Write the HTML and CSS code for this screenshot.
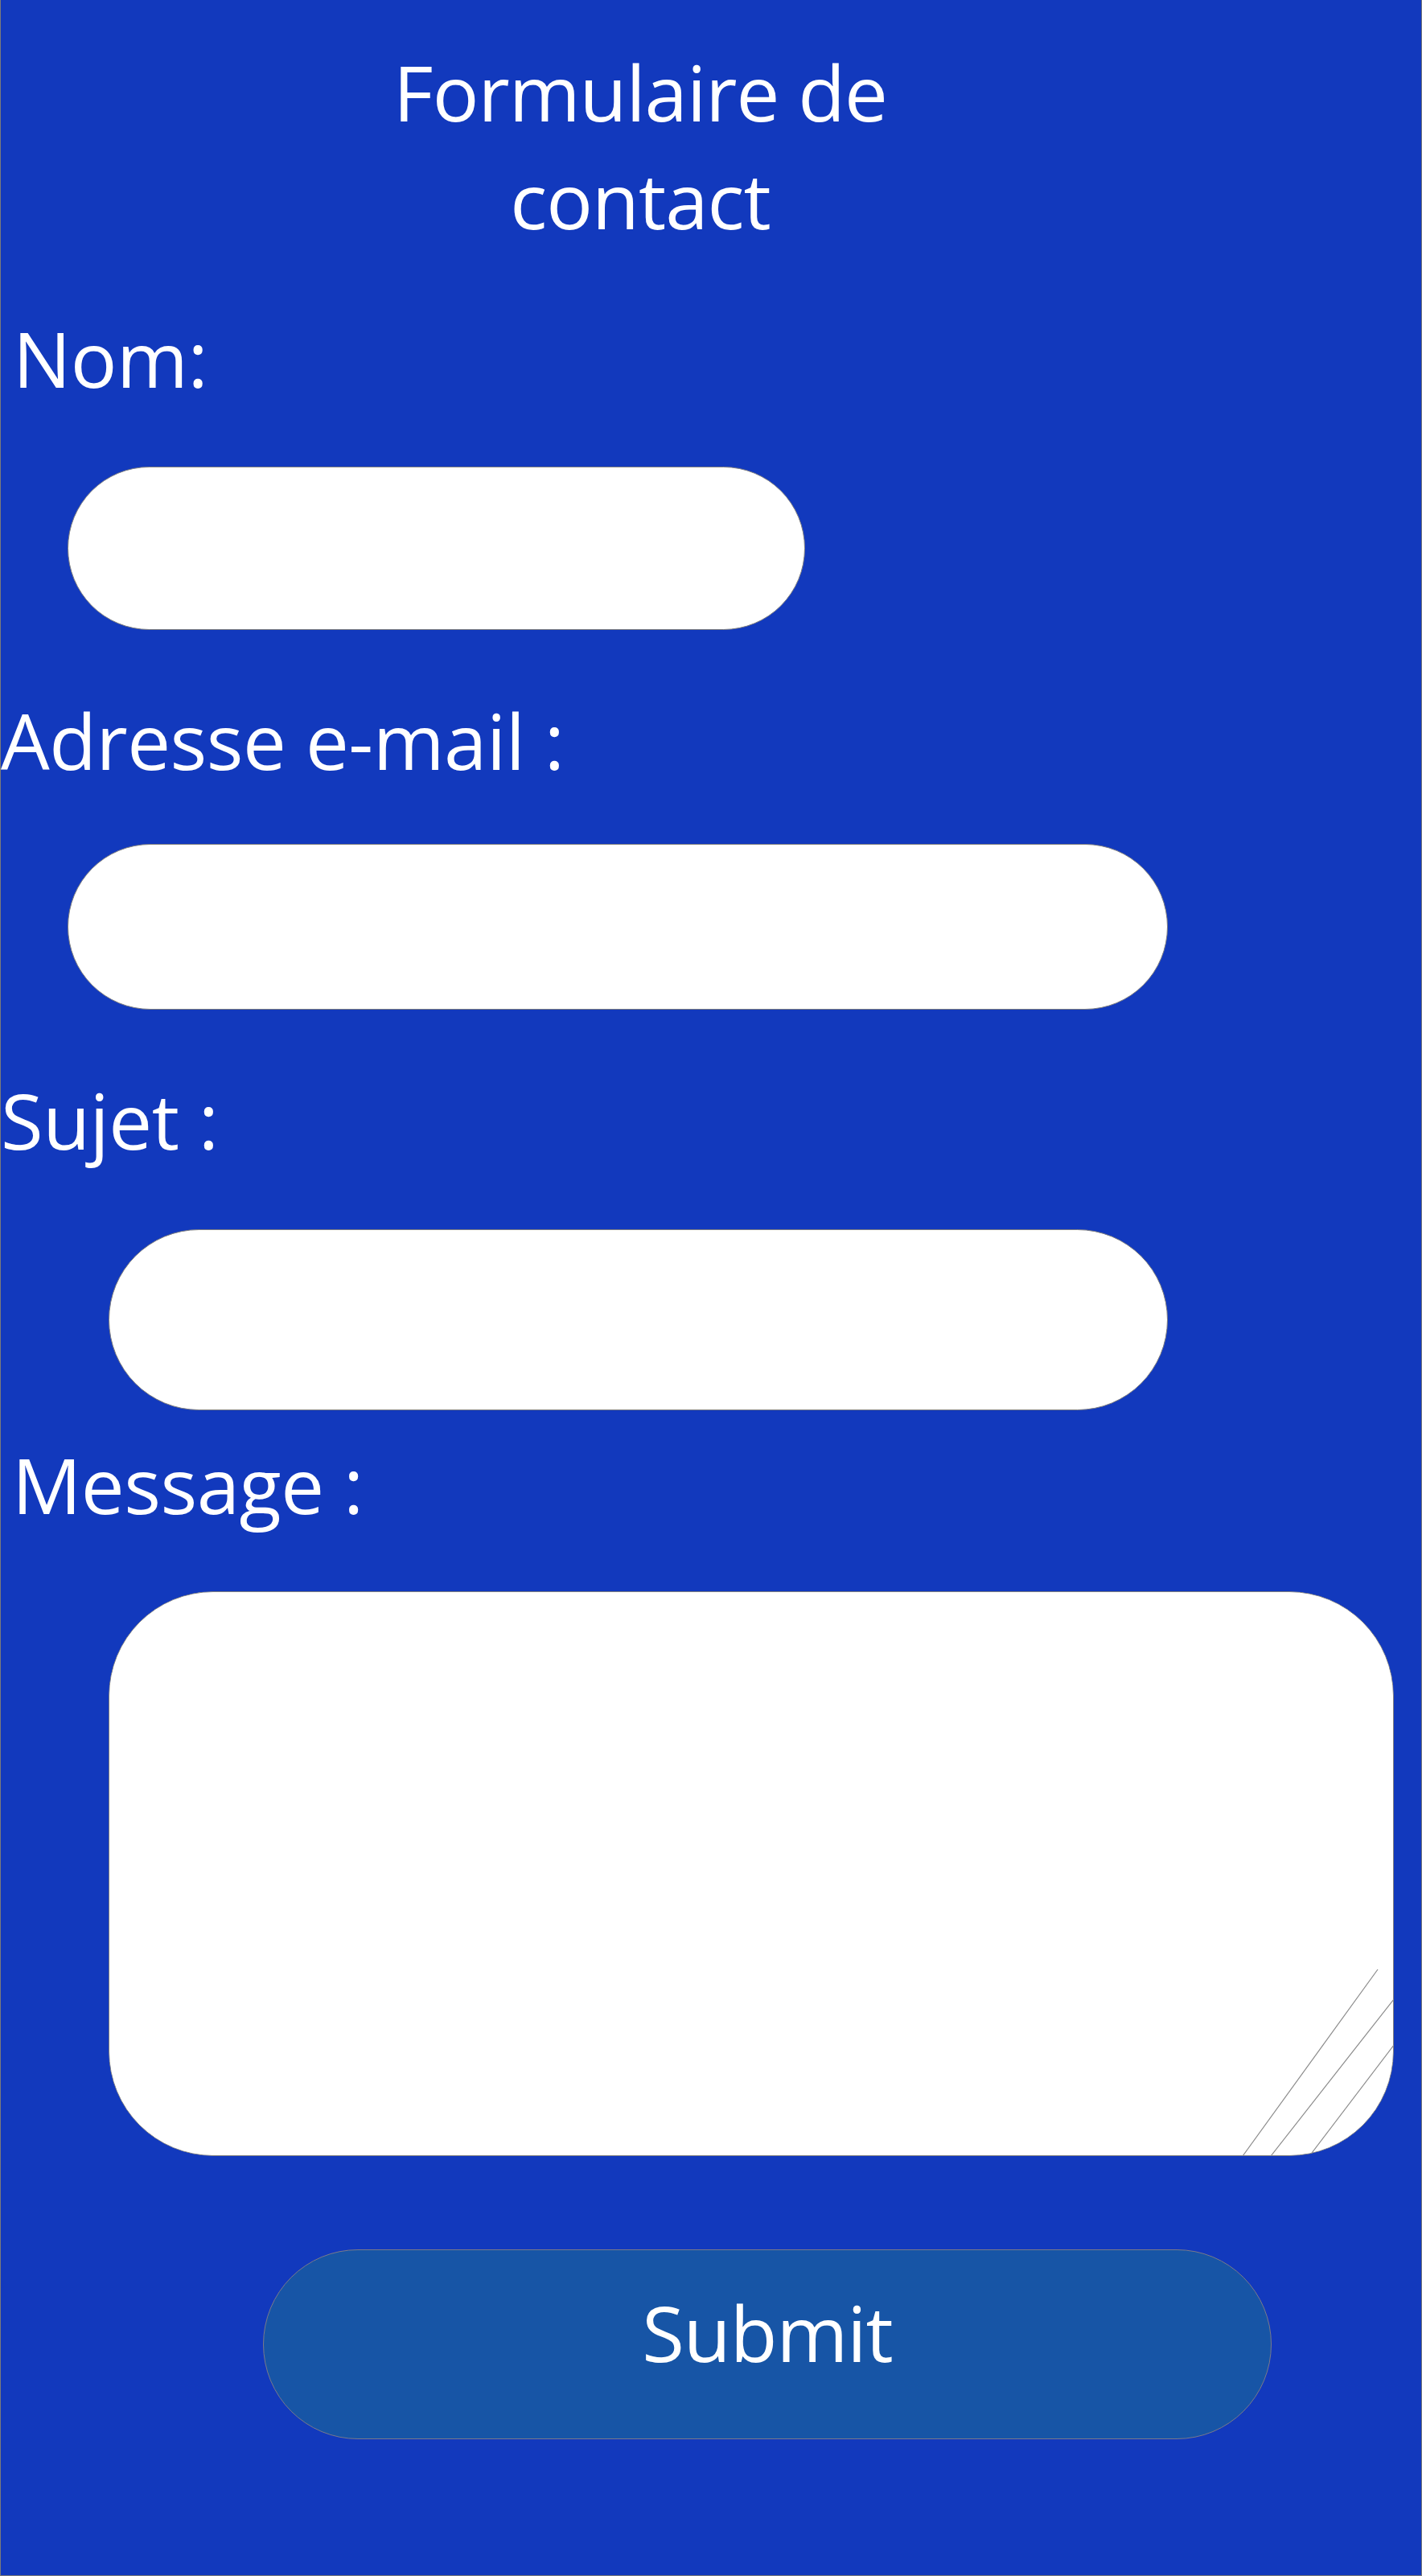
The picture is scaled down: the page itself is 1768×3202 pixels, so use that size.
FILE: index.html
```html
<!DOCTYPE html>
<html lang="fr">
<head>
<meta charset="utf-8">
<title>Formulaire de contact</title>
<link rel="stylesheet" href="styles.css">
</head>
<body>
<div class="page">
  <form class="contact">
    <h1 class="title">Formulaire de contact</h1>
    <label class="label label-nom" for="nom">Nom:</label>
    <input class="field field-nom" id="nom" type="text">
    <label class="label label-email" for="email">Adresse e-mail :</label>
    <input class="field field-email" id="email" type="email">
    <label class="label label-sujet" for="sujet">Sujet :</label>
    <input class="field field-sujet" id="sujet" type="text">
    <label class="label label-message" for="message">Message :</label>
    <div class="message-box">
      <textarea class="message" id="message"></textarea>
      <svg class="grip" width="200" height="262" viewBox="0 0 200 262" aria-hidden="true">
        <line x1="180" y1="30" x2="12" y2="262"/>
        <line x1="200" y1="67" x2="47" y2="262"/>
        <line x1="200" y1="124" x2="95" y2="262"/>
      </svg>
    </div>
    <button class="submit" type="submit">Submit</button>
  </form>
</div>
</body>
</html>
```
FILE: styles.css
```css
html, body {
  margin: 0;
  padding: 0;
  background: #1239bd;
}

.page {
  box-sizing: border-box;
  width: 1768px;
  height: 3202px;
  background: #1239bd;
  border: 1px solid #7a7a7a;
  border-top: none;
  font-family: "Open Sans", "Noto Sans", sans-serif;
  color: #ffffff;
}

.contact {
  display: flex;
  flex-direction: column;
  align-items: flex-start;
}

.title {
  width: 700px;
  margin: 47px 0 0 445px;
  font-size: 96px;
  font-weight: 400;
  line-height: 134px;
  letter-spacing: -1px;
  text-align: center;
}

.label {
  display: block;
  font-size: 96px;
  line-height: 134px;
  font-weight: 400;
  letter-spacing: -0.5px;
}

.label-nom { margin: 63px 0 0 0; padding-left: 15px; }
.label-email { margin: 70px 0 0 0; padding-left: 0; }
.label-sujet { margin: 70px 0 0 0; padding-left: 0; }
.label-message { margin: 25px 0 0 0; padding-left: 14px; }

.field {
  box-sizing: border-box;
  display: block;
  background: #ffffff;
  border: 1px solid #808080;
  outline: none;
  padding: 0 60px;
  font-family: inherit;
  font-size: 60px;
}

.field-nom {
  width: 917px;
  height: 203px;
  margin: 68px 0 0 83px;
  border-radius: 102px;
}

.field-email {
  width: 1368px;
  height: 206px;
  margin: 62px 0 0 83px;
  border-radius: 103px;
}

.field-sujet {
  width: 1317px;
  height: 225px;
  margin: 69px 0 0 134px;
  border-radius: 113px;
}

.message-box {
  position: relative;
  width: 1598px;
  height: 702px;
  margin: 66px 0 0 134px;
  border-radius: 130px;
  overflow: hidden;
}

.message {
  box-sizing: border-box;
  display: block;
  width: 100%;
  height: 100%;
  margin: 0;
  background: #ffffff;
  border: 1px solid #808080;
  border-radius: 130px;
  outline: none;
  resize: none;
  padding: 60px;
  font-family: inherit;
  font-size: 60px;
}

.grip {
  position: absolute;
  right: 0;
  bottom: 0;
  pointer-events: none;
}

.grip line {
  stroke: #8a8a8a;
  stroke-width: 1.2;
}

.submit {
  box-sizing: border-box;
  display: flex;
  align-items: center;
  justify-content: center;
  width: 1254px;
  height: 236px;
  margin: 116px 0 0 326px;
  padding: 0 0 30px 0;
  background: #1755a6;
  border: 1px solid #7a7a8a;
  border-radius: 118px;
  color: #ffffff;
  font-family: inherit;
  font-size: 96px;
  line-height: 134px;
  font-weight: 400;
  letter-spacing: -1px;
  cursor: pointer;
}
```
